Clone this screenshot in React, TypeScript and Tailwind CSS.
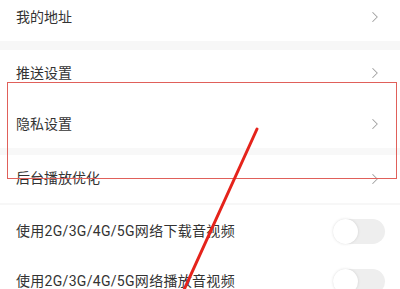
import { ChevronRight } from "lucide-react";

const font = { fontFamily: 'Roboto, "Noto Sans CJK SC", "Noto Sans", sans-serif' };

function Chevron() {
    return <ChevronRight size={18} strokeWidth={1.4} className="text-[#a0a0a0] shrink-0" />;
}

function Toggle() {
    return (
        <div className="w-[52px] h-[25px] rounded-full bg-[#eeeeee] relative shrink-0">
            <div className="absolute left-0 top-0 w-[25px] h-[25px] rounded-full bg-white shadow-[0_0_3px_rgba(0,0,0,0.12)]" />
        </div>
    );
}

export default function App() {
    return (
        <div className="relative w-[400px] h-[289px] overflow-hidden bg-white text-[#333333]" style={font}>
            {/* row 1 */}
            <div className="h-[41px] pb-[7px] pl-4 pr-[16px] flex items-center justify-between text-[14px]">
                <span>我的地址</span>
                <Chevron />
            </div>
            <div className="h-[9px] bg-[#f7f7f7]" />

            <div className="h-[46px] pl-4 pr-[16px] flex items-center justify-between text-[14px]">
                <span>推送设置</span>
                <Chevron />
            </div>

            <div className="h-[52px] pt-[4px] pl-4 pr-[16px] flex items-center justify-between text-[14px]">
                <span>隐私设置</span>
                <Chevron />
            </div>
            <div className="h-[7px] bg-[#f8f8f8]" />

            <div className="h-[48px] pb-[1px] pl-4 pr-[16px] flex items-center justify-between text-[14px]">
                <span>后台播放优化</span>
                <Chevron />
            </div>
            <div className="h-[2px] bg-[#f7f7f7]" />

            <div className="h-[52px] pl-4 pr-[15px] flex items-center justify-between text-[14px]">
                <span className="tracking-[0.3px]">使用2G/3G/4G/5G网络下载音视频</span>
                <Toggle />
            </div>
            <div className="h-[46px] pt-[2px] pl-4 pr-[15px] flex items-center justify-between text-[14px]">
                <span className="tracking-[0.3px]">使用2G/3G/4G/5G网络播放音视频</span>
                <Toggle />
            </div>

            {/* annotation overlay */}
            <div className="absolute left-[7px] top-[82px] w-[390px] h-[97px] border-[1.5px] border-[#e0605a]" />
            <svg className="absolute left-0 top-0" width="400" height="289" viewBox="0 0 400 289">
                <line x1="257" y1="129" x2="183" y2="292" stroke="#e5231b" strokeWidth="3" strokeLinecap="round" />
            </svg>
        </div>
    );
}
